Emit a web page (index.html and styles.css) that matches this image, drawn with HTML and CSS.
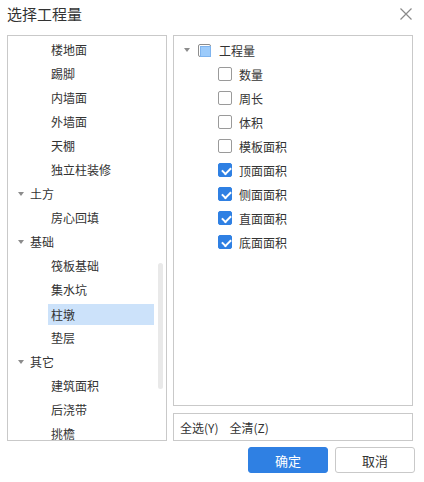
FILE: index.html
```html
<!DOCTYPE html>
<html lang="zh-CN">
<head>
  <meta charset="UTF-8" />
  <title>选择工程量</title>
  <link rel="stylesheet" href="styles.css">
</head>
<body>

<div class="dialog">
  <div class="dialog-header">
    <span class="dialog-title">选择工程量</span>
    <span class="dialog-close">
      <svg width="12" height="12" viewBox="0 0 12 12"><path d="M0.5 0.5 L11.5 11.5 M11.5 0.5 L0.5 11.5" stroke="#8a8a8a" stroke-width="1.2" fill="none"/></svg>
    </span>
  </div>

  <div class="dialog-body">
    <!-- left: component tree -->
    <div class="panel tree-left">
      <div class="tree-row child">楼地面</div>
      <div class="tree-row child">踢脚</div>
      <div class="tree-row child">内墙面</div>
      <div class="tree-row child">外墙面</div>
      <div class="tree-row child">天棚</div>
      <div class="tree-row child">独立柱装修</div>
      <div class="tree-row parent"><span class="caret"></span>土方</div>
      <div class="tree-row child">房心回填</div>
      <div class="tree-row parent"><span class="caret"></span>基础</div>
      <div class="tree-row child">筏板基础</div>
      <div class="tree-row child">集水坑</div>
      <div class="tree-row child"><span class="selected">柱墩</span></div>
      <div class="tree-row child">垫层</div>
      <div class="tree-row parent"><span class="caret"></span>其它</div>
      <div class="tree-row child">建筑面积</div>
      <div class="tree-row child">后浇带</div>
      <div class="tree-row child">挑檐</div>
      <div class="scrollbar"></div>
    </div>

    <div class="right-col">
      <!-- right: quantity tree -->
      <div class="panel tree-right">
        <div class="q-row root"><span class="caret"></span><span class="check partial"></span>工程量</div>
        <div class="q-row"><span class="check"></span>数量</div>
        <div class="q-row"><span class="check"></span>周长</div>
        <div class="q-row"><span class="check"></span>体积</div>
        <div class="q-row"><span class="check"></span>模板面积</div>
        <div class="q-row"><span class="check on"></span>顶面面积</div>
        <div class="q-row"><span class="check on"></span>侧面面积</div>
        <div class="q-row"><span class="check on"></span>直面面积</div>
        <div class="q-row"><span class="check on"></span>底面面积</div>
      </div>
      <div class="panel quick-bar">
        <span>全选(Y)</span>
        <span>全清(Z)</span>
      </div>
    </div>
  </div>

  <div class="dialog-footer">
    <button class="btn btn-primary">确定</button>
    <button class="btn">取消</button>
  </div>
</div>

</body>
</html>
```

FILE: styles.css
```css
* {
  box-sizing: border-box;
}

body {
  margin: 0;
  font-family: "Noto Sans CJK SC", "Liberation Sans", sans-serif;
  font-size: 12px;
  color: #333;
  background: #fff;
}

.dialog {
  width: 424px;
  height: 482px;
  display: flex;
  flex-direction: column;
}

.dialog-header {
  height: 35px;
  display: flex;
  align-items: flex-start;
  justify-content: space-between;
  padding: 4px 12px 0 7px;
}

.dialog-title {
  font-size: 15px;
  line-height: 20px;
  color: #333;
}

.dialog-close {
  display: flex;
  padding-top: 4px;
}

.dialog-body {
  display: flex;
  gap: 6px;
  padding: 0 11px 0 7px;
  height: 406px;
}

.panel {
  border: 1px solid #c9c9c9;
  background: #fff;
}

.tree-left {
  position: relative;
  width: 160px;
  overflow: hidden;
  padding-top: 2px;
}

.tree-row {
  height: 24px;
  line-height: 24px;
  white-space: nowrap;
  display: flex;
  align-items: center;
  padding-left: 43px;
}

.tree-row.parent {
  padding-left: 10px;
}

.tree-row.child:has(.selected) {
  padding-left: 40px;
}

.selected {
  display: block;
  width: 106px;
  height: 21px;
  line-height: 21px;
  padding-left: 3px;
  background: #cce2fa;
}

.caret {
  width: 0;
  height: 0;
  border-left: 3.5px solid transparent;
  border-right: 3.5px solid transparent;
  border-top: 4px solid #8c8c8c;
  margin-right: 6px;
}

.scrollbar {
  position: absolute;
  left: 150px;
  top: 227px;
  width: 5px;
  height: 126px;
  border-radius: 3px;
  background: #e9e9e9;
}

.right-col {
  flex: 1;
  display: flex;
  flex-direction: column;
  gap: 7px;
}

.tree-right {
  flex: 1;
  padding-top: 2px;
}

.q-row {
  height: 24px;
  display: flex;
  align-items: center;
  padding-left: 44px;
  white-space: nowrap;
}

.q-row.root {
  padding-left: 10px;
}

.q-row.root .caret {
  margin-right: 8px;
}

.check {
  width: 14px;
  height: 14px;
  border: 1px solid #9a9a9a;
  border-radius: 2px;
  margin-right: 7px;
  background: #fff;
  position: relative;
}

.check.partial {
  width: 13px;
  height: 13px;
  border-color: #8d8d8d;
  margin-right: 8px;
}

.check.partial::after {
  content: "";
  position: absolute;
  left: 1px;
  top: 1px;
  width: 9px;
  height: 9px;
  background: #9ccbfb;
  border: 1px solid #7fb4ee;
}

.check.on {
  background: #2f80e3;
  border-color: #2f80e3;
}

.check.on::after {
  content: "";
  position: absolute;
  left: 2.5px;
  top: 2.5px;
  width: 7px;
  height: 4px;
  border-left: 2px solid #fff;
  border-bottom: 2px solid #fff;
  transform: rotate(-45deg);
}

.quick-bar {
  height: 28px;
  display: flex;
  align-items: center;
  gap: 11px;
  padding-left: 6px;
}

.dialog-footer {
  display: flex;
  justify-content: flex-end;
  gap: 7px;
  padding: 6px 9px 0 0;
}

.btn {
  width: 80px;
  height: 26px;
  border: 1px solid #c9c9c9;
  border-radius: 3px;
  background: #fff;
  font-family: "Noto Sans CJK SC", "Liberation Sans", sans-serif;
  font-size: 13px;
  color: #333;
  padding: 0;
}

.btn-primary {
  background: #2f80e3;
  border-color: #2f80e3;
  color: #fff;
}
```
